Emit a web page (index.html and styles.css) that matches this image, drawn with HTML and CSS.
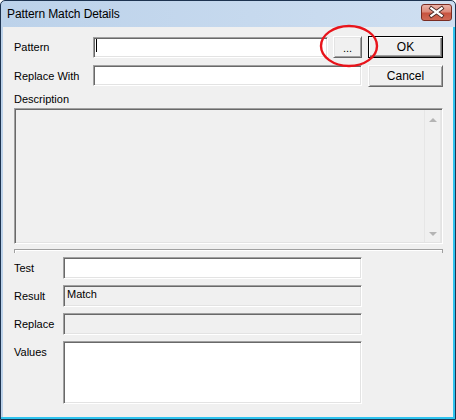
FILE: index.html
```html
<!DOCTYPE html>
<html>
<head>
<meta charset="utf-8">
<link rel="stylesheet" href="styles.css">
</head>
<body>
<div class="window">
  <div class="titlebar">
    <span class="title">Pattern Match Details</span>
    <div class="close">
      <svg width="31" height="17" viewBox="0 0 31 17">
        <path d="M10 4 L21 12 M21 4 L10 12" stroke="#4a2a26" stroke-width="4.2" stroke-linecap="square"/>
        <path d="M10 4 L21 12 M21 4 L10 12" stroke="#ffffff" stroke-width="2.4" stroke-linecap="square"/>
      </svg>
    </div>
  </div>
  <div class="body">
    <div class="client">
      <div class="row row1">
        <span class="lbl">Pattern</span>
        <div class="edit e-pattern"><span class="caret"></span></div>
        <button class="btn dots">...</button>
        <button class="btn ok">OK</button>
      </div>
      <div class="row row2">
        <span class="lbl">Replace With</span>
        <div class="edit e-replace"></div>
        <button class="btn cancel">Cancel</button>
      </div>
      <div class="desc-label">Description</div>
      <div class="desc-box">
        <div class="scroll">
          <span class="arrow up"></span>
          <span class="arrow down"></span>
        </div>
      </div>
      <div class="sep"></div>
      <div class="lower">
        <span class="lbl2">Test</span>
        <div class="edit field"></div>
        <span class="lbl2">Result</span>
        <div class="edit field ro">Match</div>
        <span class="lbl2">Replace</span>
        <div class="edit field ro"></div>
        <span class="lbl2 top">Values</span>
        <div class="edit field values"></div>
      </div>
    </div>
  </div>
  <svg class="annot" width="62" height="46" viewBox="0 0 62 46">
    <ellipse cx="30" cy="22" rx="28" ry="20" fill="none" stroke="#e8141b" stroke-width="2.4"/>
  </svg>
</div>
</body>
</html>
```
FILE: styles.css
```css
* { box-sizing: border-box; }
html, body { margin: 0; padding: 0; }
body {
  width: 456px;
  height: 420px;
  overflow: hidden;
  background: #ffffff;
  font-family: "Liberation Sans", Arial, sans-serif;
  font-size: 11px;
  color: #000;
}
.window {
  position: relative;
  width: 456px;
  height: 420px;
  display: flex;
  flex-direction: column;
  background: linear-gradient(to right, #bcd2ea, #c6d9ee 55%, #cfdff1);
  border: 1px solid #1d3350;
  border-radius: 5px 5px 0 0;
}
.titlebar {
  height: 26px;
  flex: none;
  display: flex;
  align-items: center;
  justify-content: space-between;
  padding-left: 6px;
  padding-right: 3px;
}
.title {
  font-size: 12px;
  color: #000;
  margin-top: -1px;
  letter-spacing: -0.1px;
}
.close {
  width: 31px;
  height: 17px;
  margin-top: -3px;
  border: 1px solid #7a2c22;
  border-radius: 3px;
  background: linear-gradient(#eab3a8, #dc8a7a 45%, #c8533f 55%, #cf6a56);
  display: flex;
  align-items: center;
  justify-content: center;
  overflow: hidden;
}
.close svg { display: block; }
.body {
  flex: 1;
  display: flex;
  padding-left: 2px;
  border-right: 2px solid #2ec3ee;
  border-bottom: 2px solid #2ec3ee;
}
.client {
  flex: 1;
  background: #f0f0f0;
  padding: 9px 0 0 11px;
  display: flex;
  flex-direction: column;
}
.row {
  display: flex;
  align-items: flex-start;
  height: 22px;
}
.row2 { margin-top: 7px; }
.lbl {
  width: 79px;
  line-height: 22px;
  flex: none;
}
.edit {
  background: #ffffff;
  border: 1px solid;
  border-color: #a0a0a0 #ffffff #ffffff #a0a0a0;
  box-shadow: inset 1px 1px 0 #696969, inset -1px -1px 0 #e3e3e3;
  flex: none;
}
.e-pattern {
  width: 235px;
  height: 21px;
  margin-top: 1px;
  padding: 1px 0 0 2px;
}
.caret {
  display: block;
  width: 1px;
  height: 13px;
  background: #000;
}
.e-replace {
  width: 269px;
  height: 21px;
}
.btn {
  font-family: "Liberation Sans", Arial, sans-serif;
  font-size: 11px;
  color: #000;
  background: #f0f0f0;
  height: 22px;
  padding: 0;
  margin: 0;
  border: 1px solid;
  border-color: #ffffff #696969 #696969 #ffffff;
  box-shadow: inset 1px 1px 0 #e3e3e3, inset -1px -1px 0 #a0a0a0;
  flex: none;
}
.dots {
  width: 29px;
  margin-left: 5px;
  padding-top: 2px;
}
.ok {
  width: 75px;
  margin-left: 6px;
  font-size: 12px;
  border-color: #000;
  box-shadow: inset 1px 1px 0 #ffffff, inset -1px -1px 0 #696969, inset -2px -2px 0 #a0a0a0;
}
.cancel {
  width: 75px;
  margin-left: 6px;
  font-size: 12px;
}
.desc-label {
  margin-top: 6px;
  line-height: 13px;
  height: 13px;
}
.desc-box {
  margin-top: 2px;
  width: 429px;
  height: 136px;
  background: #f0f0f0;
  border: 1px solid;
  border-color: #a0a0a0 #ffffff #ffffff #a0a0a0;
  box-shadow: inset 1px 1px 0 #696969, inset -1px -1px 0 #e3e3e3;
  display: flex;
  justify-content: flex-end;
  padding: 1px;
}
.scroll {
  width: 17px;
  height: 100%;
  border-left: 1px solid #e6e6e6;
  border-right: 1px solid #e6e6e6;
  display: flex;
  flex-direction: column;
  justify-content: space-between;
  align-items: center;
  padding: 8px 0 6px;
}
.arrow {
  width: 0;
  height: 0;
  border-left: 4px solid transparent;
  border-right: 4px solid transparent;
}
.arrow.up { border-bottom: 4px solid #b4b4b4; }
.arrow.down { border-top: 4px solid #b4b4b4; }
.sep {
  margin-top: 5px;
  width: 429px;
  height: 4px;
  border-top: 1px solid #a0a0a0;
  border-left: 1px solid #a0a0a0;
  border-right: 1px solid #a0a0a0;
  box-shadow: inset 1px 1px 0 #ffffff;
}
.lower {
  margin-top: 4px;
  display: grid;
  grid-template-columns: 49px 299px;
  grid-template-rows: 22px 22px 22px 63px;
  row-gap: 6px;
}
.lbl2 {
  line-height: 22px;
}
.lbl2.top {
  line-height: 13px;
  padding-top: 5px;
}
.field {
  width: 299px;
  height: 22px;
}
.field.ro {
  background: #f0f0f0;
  padding: 2px 0 0 3px;
  line-height: 13px;
}
.field.values { height: 63px; }
.annot {
  position: absolute;
  left: 318px;
  top: 23px;
}
```
